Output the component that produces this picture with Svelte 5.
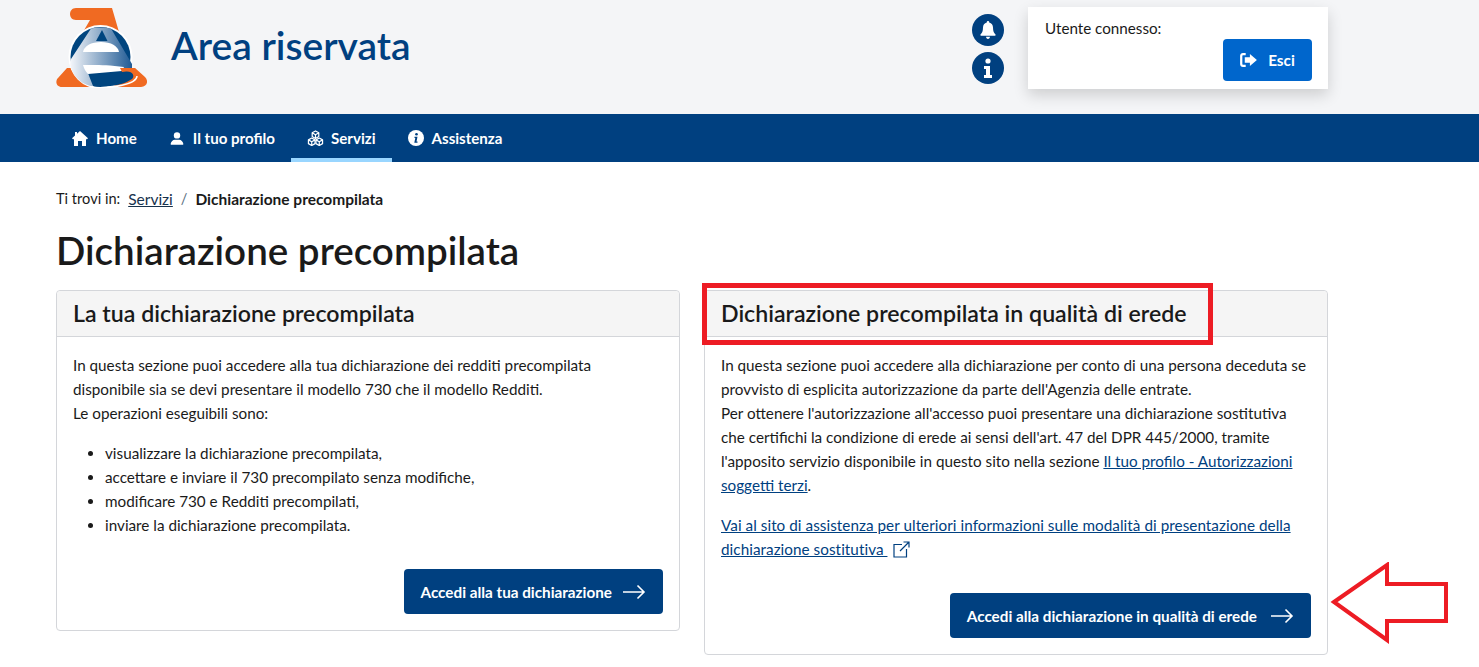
<script>
  const navItems = [
    { label: 'Home', icon: 'home' },
    { label: 'Il tuo profilo', icon: 'user' },
    { label: 'Servizi', icon: 'cubes', active: true },
    { label: 'Assistenza', icon: 'info' }
  ];
  const operations = [
    'visualizzare la dichiarazione precompilata,',
    'accettare e inviare il 730 precompilato senza modifiche,',
    'modificare 730 e Redditi precompilati,',
    'inviare la dichiarazione precompilata.'
  ];
</script>

{#snippet arrow()}
  <svg class="btn-arrow" viewBox="0 0 24 16" width="24" height="16" fill="none" stroke="#fff" stroke-width="1.6">
    <path d="M1 8h21M15.500 1.500 22 8l-6.500 6.500" />
  </svg>
{/snippet}

<div class="page">
  <header class="top">
    <svg class="logo" viewBox="0 0 91 80" width="91" height="80">
      <defs>
        <linearGradient id="lg" x1="0" x2="1" y1="0" y2="0">
          <stop offset="0" stop-color="#f4f6fa" />
          <stop offset="1" stop-color="#1f5a94" />
        </linearGradient>
      </defs>
      <path fill="#f06a22" d="M20 0H56L63 24H27L34 12H20C12 12 12 0 20 0Z" />
      <path fill="#f06a22" d="M11 60H79L89 69C93 73 91 79 85 79H6C0 79-1 73 2 70Z" />
      <circle cx="44.500" cy="49" r="32" fill="#fff" />
      <circle cx="44.500" cy="49" r="30" fill="#00457f" />
      <path fill="url(#lg)" d="M35 20.500C41 19 48 19 55 20.500L76 56 V60 H30L37 78C28 78 18 70 15 60 14 57 14 54 15 51Z" />
      <path fill="#00457f" d="M46 22L51.500 33H40Z" />
      <path fill="#fff" d="M27 44C28 38 35 34 45 34 55 34 62 38 63 44Z" />
      <path fill="#fff" d="M27 57C28 61 30 64 32 66L66 63 68 59 54 57.500C44 57 34 57 27 57Z" />
      <path fill="#f06a22" d="M64 60H79L80 64 66 64Z" />
      <path fill="#00457f" d="M36 67C46 66 60 65 70 63.500 77 63 79 68 76 71 66 78 50 79.500 37 78 40 74 40 70 36 67Z" />
      <path fill="none" stroke="#fff" stroke-width="1.500" d="M36 79.500C56 81 81 76 81 68" />
    </svg>
    <h2 class="area-title">Area riservata</h2>
    <div class="top-right">
      <div class="round-icons">
        <span class="round">
          <svg viewBox="0 0 16 18" width="16" height="18" fill="#fff">
            <path d="M8 0c.8 0 1.300.6 1.200 1.400C11.600 1.900 13 4 13 6.500c0 4 1 5.500 2.500 7 .4.500.1 1.200-.6 1.200H1.100c-.7 0-1-.7-.6-1.200C2 12 3 10.500 3 6.500 3 4 4.400 1.900 6.800 1.400 6.700.6 7.200 0 8 0ZM6 15.800h4C10 17 9.100 18 8 18s-2-1-2-2.200Z" />
          </svg>
        </span>
        <span class="round">
          <svg viewBox="0 0 10 20" width="10" height="20" fill="#fff">
            <circle cx="5" cy="3" r="2.600" />
            <path d="M1 8h6v9h2v3H1v-3h2v-6H1Z" />
          </svg>
        </span>
      </div>
      <div class="user-box">
        <div class="user-label">Utente connesso:</div>
        <button class="logout">
          <svg viewBox="0 0 18 15" width="17" height="14" fill="#fff">
            <path d="M6 0v2.500H3c-.4 0-.6.2-.6.600v8.800c0 .4.200.6.600.6h3V15H3c-1.700 0-3-1.300-3-3V3c0-1.700 1.300-3 3-3ZM10.500 1 18 7.500 10.500 14v-3.500H5v-6h5.500Z" />
          </svg>
          Esci
        </button>
      </div>
    </div>
  </header>

  <nav class="nav">
    {#each navItems as item}
      <a class="nav-item" class:active={item.active} href="#top">
        {#if item.icon === 'home'}
          <svg viewBox="0 0 16 15" width="16" height="15" fill="#fff">
            <path d="M8 0 16 7.200 14.800 8.500 14 7.800V15H10V10H6v5H2V7.800L1.200 8.500 0 7.200 3 4.500V1H5V2.700Z" />
          </svg>
        {:else if item.icon === 'user'}
          <svg viewBox="-1.500 -1 19 17" width="16" height="15" fill="#fff">
            <circle cx="8" cy="3.800" r="3.800" />
            <path d="M1.500 15c-.8 0-1.200-.5-1-1.300C1 11 3 9 5.500 9h5c2.500 0 4.500 2 5 4.700.2.800-.2 1.300-1 1.300Z" />
          </svg>
        {:else if item.icon === 'cubes'}
          <svg class="cubes" viewBox="0 0 18 17" width="17" height="16" fill="none" stroke="#fff" stroke-width="1.300" stroke-linejoin="round">
            <path d="M9 1 12.500 3V7L9 9 5.500 7V3ZM5.500 3 9 5l3.500-2M9 5v4" />
            <path d="M5 8.500 8.500 10.500V14.500L5 16.500 1.500 14.500V10.500ZM1.500 10.500 5 12.500l3.500-2M5 12.500v4" />
            <path d="M13 8.500 16.500 10.500V14.500L13 16.500 9.500 14.500V10.500ZM9.500 10.500 13 12.500l3.500-2M13 12.500v4" />
          </svg>
        {:else}
          <svg viewBox="0 0 16 16" width="16" height="16">
            <circle cx="8" cy="8" r="8" fill="#fff" />
            <circle cx="8.500" cy="4.300" r="1.300" fill="#004080" />
            <path fill="#004080" d="M6.500 6.800h3L8.500 11.500h1v1.300h-3.200l1-4.700h-.8Z" />
          </svg>
        {/if}
        <span>{item.label}</span>
      </a>
    {/each}
  </nav>

  <main class="content">
    <div class="breadcrumb">
      <span>Ti trovi in:</span>
      <a href="#top">Servizi</a>
      <span class="sep">/</span>
      <strong>Dichiarazione precompilata</strong>
    </div>
    <h1>Dichiarazione precompilata</h1>

    <div class="cards">
      <section class="card">
        <h3 class="card-head">La tua dichiarazione precompilata</h3>
        <div class="card-body">
          <p>
            In questa sezione puoi accedere alla tua dichiarazione dei redditi precompilata<br />
            disponibile sia se devi presentare il modello 730 che il modello Redditi.<br />
            Le operazioni eseguibili sono:
          </p>
          <ul>
            {#each operations as op}
              <li>{op}</li>
            {/each}
          </ul>
          <div class="actions">
            <button class="primary">Accedi alla tua dichiarazione {@render arrow()}</button>
          </div>
        </div>
      </section>

      <section class="card">
        <h3 class="card-head">Dichiarazione precompilata in qualità di erede</h3>
        <div class="card-body">
          <p>
            In questa sezione puoi accedere alla dichiarazione per conto di una persona deceduta se<br />
            provvisto di esplicita autorizzazione da parte dell'Agenzia delle entrate.<br />
            Per ottenere l'autorizzazione all'accesso puoi presentare una dichiarazione sostitutiva<br />
            che certifichi la condizione di erede ai sensi dell'art. 47 del DPR 445/2000, tramite<br />
            l'apposito servizio disponibile in questo sito nella sezione <a href="#top">Il tuo profilo - Autorizzazioni<br />soggetti terzi</a>.
          </p>
          <p class="second">
            <a href="#top">Vai al sito di assistenza per ulteriori informazioni sulle modalità di presentazione della<br />dichiarazione sostitutiva&nbsp;</a>
            <svg class="ext" viewBox="0 0 17 17" width="17" height="17" fill="none" stroke="#004080" stroke-width="1.200">
              <path d="M9 3.500H1v12.500h12.500V8M7 10 16 1M10.500 1H16V6.500" />
            </svg>
          </p>
          <div class="actions">
            <button class="primary wide">Accedi alla dichiarazione in qualità di erede {@render arrow()}</button>
          </div>
        </div>
      </section>
    </div>
  </main>

  <div class="red-box"></div>
  <svg class="red-arrow" viewBox="0 0 120 82" width="120" height="82" fill="#fff" stroke="#ed1c24" stroke-width="4">
    <path d="M4 40 57 3V22H116V59H57V78Z" />
  </svg>
</div>

<style>
  :global(body) {
    margin: 0;
    background: #fff;
  }

  .page {
    position: relative;
    font-family: Lato, "Open Sans", sans-serif;
    font-size: 15.250px;
    line-height: 24px;
    color: #1a1a1a;
    padding-bottom: 12px;
  }

  .top {
    height: 114px;
    box-sizing: border-box;
    background: #f4f5f7;
    padding: 0 151px 0 56px;
    display: flex;
    align-items: flex-start;
  }

  .logo {
    margin-top: 8px;
    flex-shrink: 0;
  }

  .area-title {
    margin: 22px 0 0 24px;
    font-size: 39px;
    line-height: 46px;
    font-weight: 600;
    color: #004080;
  }

  .top-right {
    margin-left: auto;
    display: flex;
    align-items: flex-start;
    gap: 24px;
  }

  .round-icons {
    display: flex;
    flex-direction: column;
    gap: 6px;
    margin-top: 14px;
  }

  .round {
    width: 32px;
    height: 32px;
    border-radius: 50%;
    background: #004080;
    display: flex;
    align-items: center;
    justify-content: center;
  }

  .user-box {
    width: 300px;
    height: 82px;
    box-sizing: border-box;
    margin-top: 7px;
    padding: 9px 16px 8px 17px;
    background: #fff;
    box-shadow: 0 6px 14px rgba(0, 0, 0, 0.16);
    display: flex;
    flex-direction: column;
    justify-content: flex-start;
  }

  .user-label {
    font-size: 15.200px;
    height: 23px;
  }

  .logout {
    align-self: flex-end;
    width: 89px;
    height: 42px;
    border: none;
    border-radius: 4px;
    background: #0066cc;
    color: #fff;
    font: inherit;
    font-weight: 700;
    display: flex;
    align-items: center;
    justify-content: center;
    gap: 11px;
  }

  .nav {
    height: 48px;
    background: #004080;
    padding: 0 56px;
    display: flex;
  }

  .nav-item {
    display: flex;
    align-items: center;
    gap: 8px;
    padding: 0 16px;
    color: #fff;
    font-weight: 700;
    font-size: 15.100px;
    text-decoration: none;
    box-sizing: border-box;
    border-bottom: 4px solid transparent;
    border-top: 4px solid transparent;
  }

  .nav-item.active {
    border-bottom-color: #99d6ff;
  }

  .cubes {
    margin-right: -1px;
  }

  .content {
    padding: 25px 151px 0 56px;
  }

  .breadcrumb {
    font-size: 14.600px;
    display: flex;
    gap: 8px;
  }

  .breadcrumb a {
    text-decoration: underline;
    color: #17324d;
    font-size: 15.500px;
  }

  .breadcrumb .sep {
    color: #5c6f82;
  }

  .breadcrumb strong {
    font-size: 15.500px;
  }

  h1 {
    margin: 15px 0 16px;
    font-size: 38.600px;
    line-height: 48px;
    font-weight: 600;
    color: #1a1a1a;
  }

  .cards {
    display: grid;
    grid-template-columns: 1fr 1fr;
    gap: 24px;
    align-items: start;
  }

  .card {
    border: 1px solid #d4d6da;
    border-radius: 4px;
  }

  .card-head {
    margin: 0;
    height: 46px;
    box-sizing: border-box;
    padding: 0 16px;
    background: #f5f5f5;
    border-bottom: 1px solid #d4d6da;
    border-radius: 4px 4px 0 0;
    font-size: 23.150px;
    line-height: 45px;
    font-weight: 600;
  }

  .card-body {
    padding: 16px 16px 16px;
  }

  p {
    margin: 0;
  }

  p a {
    color: #004080;
    text-decoration: underline;
  }

  .second {
    margin-top: 16px;
  }

  .second a {
    letter-spacing: 0.05px;
  }

  .ext {
    vertical-align: -3px;
    margin-left: 2px;
  }

  ul {
    margin: 16px 0 0;
    padding-left: 32px;
  }

  .actions {
    display: flex;
    justify-content: flex-end;
    margin-top: 32px;
  }

  .primary {
    height: 45px;
    padding: 0 17px;
    border: none;
    border-radius: 4px;
    background: #004080;
    color: #fff;
    font: inherit;
    font-weight: 700;
    display: flex;
    align-items: center;
    gap: 10px;
  }

  .primary.wide {
    gap: 13px;
  }

  .red-box {
    position: absolute;
    left: 702px;
    top: 283px;
    width: 511px;
    height: 62px;
    box-sizing: border-box;
    border: 5px solid #ed1c24;
  }

  .red-arrow {
    position: absolute;
    left: 1330px;
    top: 562px;
  }
</style>
